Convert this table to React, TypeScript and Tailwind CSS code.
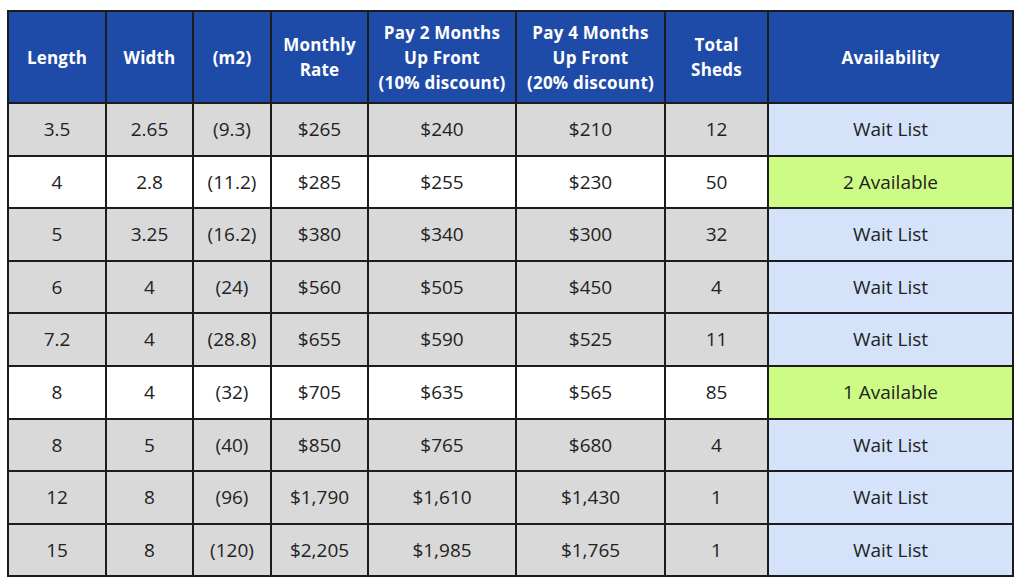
const rows = [
  ["3.5", "2.65", "(9.3)", "$265", "$240", "$210", "12", "Wait List"],
  ["4", "2.8", "(11.2)", "$285", "$255", "$230", "50", "2 Available"],
  ["5", "3.25", "(16.2)", "$380", "$340", "$300", "32", "Wait List"],
  ["6", "4", "(24)", "$560", "$505", "$450", "4", "Wait List"],
  ["7.2", "4", "(28.8)", "$655", "$590", "$525", "11", "Wait List"],
  ["8", "4", "(32)", "$705", "$635", "$565", "85", "1 Available"],
  ["8", "5", "(40)", "$850", "$765", "$680", "4", "Wait List"],
  ["12", "8", "(96)", "$1,790", "$1,610", "$1,430", "1", "Wait List"],
  ["15", "8", "(120)", "$2,205", "$1,985", "$1,765", "1", "Wait List"],
];

const headers = [
  "Length",
  "Width",
  "(m2)",
  "Monthly\nRate",
  "Pay 2 Months\nUp Front\n(10% discount)",
  "Pay 4 Months\nUp Front\n(20% discount)",
  "Total\nSheds",
  "Availability",
];

const widths = [98, 87, 78, 97, 148, 149, 103, 245];

export default function App() {
  return (
    <div className="w-[1024px] h-[588px] bg-white pt-[10px] pl-[7px]" style={{ fontFamily: '"Open Sans", "Liberation Sans", sans-serif' }}>
      <table className="border-collapse table-fixed w-[1005px] border-2 border-[#1c1c1c]">
        <colgroup>
          {widths.map((w, i) => (
            <col key={i} style={{ width: w }} />
          ))}
        </colgroup>
        <thead>
          <tr className="h-[92px] bg-[#1f4ba8]">
            {headers.map((h, i) => (
              <th
                key={i}
                className="border-2 border-[#1c1c1c] p-0 text-white font-bold text-[17px] leading-[25px] tracking-[0.2px] text-center whitespace-pre-line"
              >
                {h}
              </th>
            ))}
          </tr>
        </thead>
        <tbody>
          {rows.map((r, ri) => {
            const avail = r[7].includes("Available");
            return (
              <tr key={ri} className={`h-[52.6px] ${avail ? "bg-white" : "bg-[#d9d9d9]"}`}>
                {r.map((c, ci) => (
                  <td
                    key={ci}
                    className={`border-2 border-[#1c1c1c] p-0 text-center text-[19px] text-[#222222] ${
                      ci === 7 ? (avail ? "bg-[#cdfb86]" : "bg-[#d4e3fa]") : ""
                    }`}
                  >
                    {c}
                  </td>
                ))}
              </tr>
            );
          })}
        </tbody>
      </table>
    </div>
  );
}
